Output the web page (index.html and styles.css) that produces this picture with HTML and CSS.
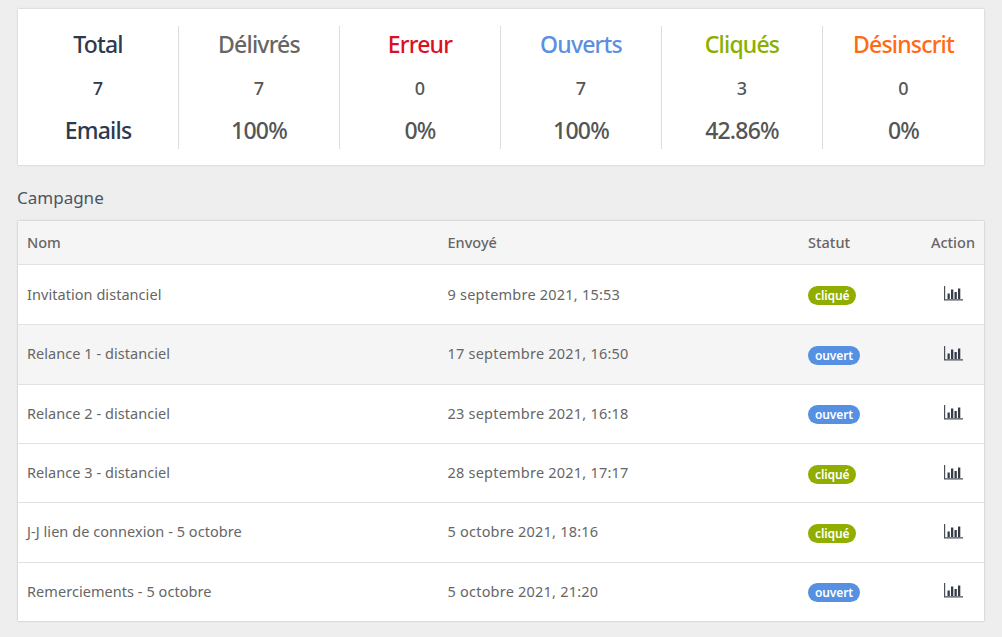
FILE: index.html
```html
<!DOCTYPE html>
<html lang="fr">
<head>
<meta charset="utf-8">
<title>Campagne</title>
<link rel="stylesheet" href="styles.css">
</head>
<body>
<svg class="defs" width="0" height="0" aria-hidden="true">
  <symbol id="chart" viewBox="0 0 19 15">
    <path fill="none" stroke="#4a5058" stroke-width="1.200" d="M.6 0v13.900H19"/>
    <path fill="#353c48" d="M3.500 7.500h2.300V13H3.500zM7 3.500h2.300V13H7zM10.500 6h2.300v7h-2.300zM14 2.500h2.300V13H14z"/>
  </symbol>
</svg>
<main class="page">
  <section class="stats">
    <div class="stat dark"><h2>Total</h2><p class="num">7</p><p class="pct">Emails</p></div>
    <div class="stat grey"><h2>Délivrés</h2><p class="num">7</p><p class="pct">100%</p></div>
    <div class="stat red"><h2>Erreur</h2><p class="num">0</p><p class="pct">0%</p></div>
    <div class="stat blue"><h2>Ouverts</h2><p class="num">7</p><p class="pct">100%</p></div>
    <div class="stat green"><h2>Cliqués</h2><p class="num">3</p><p class="pct">42.86%</p></div>
    <div class="stat orange"><h2>Désinscrit</h2><p class="num">0</p><p class="pct">0%</p></div>
  </section>
  <h3 class="title">Campagne</h3>
  <section class="table">
    <div class="row head"><div>Nom</div><div>Envoyé</div><div>Statut</div><div class="act">Action</div></div>
    <div class="row"><div class="name">Invitation distanciel</div><div class="date">9 septembre 2021, 15:53</div><div class="state"><span class="badge clicked">cliqué</span></div><div class="act"><svg class="ico"><use href="#chart"/></svg></div></div>
    <div class="row alt"><div class="name">Relance 1 - distanciel</div><div class="date">17 septembre 2021, 16:50</div><div class="state"><span class="badge opened">ouvert</span></div><div class="act"><svg class="ico"><use href="#chart"/></svg></div></div>
    <div class="row"><div class="name">Relance 2 - distanciel</div><div class="date">23 septembre 2021, 16:18</div><div class="state"><span class="badge opened">ouvert</span></div><div class="act"><svg class="ico"><use href="#chart"/></svg></div></div>
    <div class="row"><div class="name">Relance 3 - distanciel</div><div class="date">28 septembre 2021, 17:17</div><div class="state"><span class="badge clicked">cliqué</span></div><div class="act"><svg class="ico"><use href="#chart"/></svg></div></div>
    <div class="row"><div class="name">J-J lien de connexion - 5 octobre</div><div class="date">5 octobre 2021, 18:16</div><div class="state"><span class="badge clicked">cliqué</span></div><div class="act"><svg class="ico"><use href="#chart"/></svg></div></div>
    <div class="row"><div class="name">Remerciements - 5 octobre</div><div class="date">5 octobre 2021, 21:20</div><div class="state"><span class="badge opened">ouvert</span></div><div class="act"><svg class="ico"><use href="#chart"/></svg></div></div>
  </section>
</main>
</body>
</html>
```
FILE: styles.css
```css
* { box-sizing: border-box; }
html, body { margin: 0; height: 100%; }
body {
  background: #eee;
  font-family: "Noto Sans", "Open Sans", sans-serif;
  color: #666;
  overflow: hidden;
}
.defs { position: absolute; }
.page { padding: 9px 18px 0 18px; }
.stats {
  display: grid;
  grid-template-columns: repeat(6, 1fr);
  height: 156px;
  padding: 17px 0 16px;
  background: #fff;
  box-shadow: 0 0 2px rgba(0,0,0,.2);
}
.stat {
  display: flex;
  flex-direction: column;
  align-items: center;
  justify-content: space-between;
  border-right: 1px solid #ddd;
}
.stat:last-child { border-right: 0; }
.stat h2 { margin: 0; font-size: 23px; line-height: 36px; font-weight: 500; letter-spacing: -.8px; }
.num { margin: 0; padding-top: 3px; font-size: 18px; line-height: 30px; font-weight: 500; color: #555; }
.pct { margin: 0; font-size: 23px; line-height: 38px; font-weight: 500; letter-spacing: -.8px; color: #555; }
.dark h2, .dark .pct, .dark .num { color: #2b3a4e; }
.grey h2 { color: #666; }
.red h2 { color: #d9121f; }
.blue h2 { color: #5b8fdf; }
.green h2 { color: #8aaf00; }
.orange h2 { color: #ff6a13; }
.title { margin: 21px 0 11px -1px; font-size: 17px; line-height: 24px; font-weight: 400; color: #4a5563; }
.table { background: #fff; box-shadow: 0 0 2px rgba(0,0,0,.25); }
.row {
  display: grid;
  grid-template-columns: 420.500px 360.500px 1fr 80px;
  align-items: center;
  height: 59.330px;
  padding: 0 9px 2px 9px;
  font-size: 14.500px;
  border-top: 1.500px solid #e2e2e2;
}
.row.head { height: 44px; background: #f5f5f5; font-weight: 500; border-top: 0; border-bottom: 1px solid #e2e2e2; color: #666; }
.row.head + .row { border-top: 0; }
.row.alt { background: #f5f5f5; }
.name { letter-spacing: .05px; }
.date { letter-spacing: .22px; }
.act { text-align: right; }
.state { margin-top: 4px; }
.badge {
  display: block;
  width: fit-content;
  height: 19px;
  padding: 0 7px;
  border-radius: 10px;
  color: #fff;
  font-size: 12px;
  line-height: 19px;
  font-weight: 600;
  letter-spacing: -.1px;
}
.clicked { background: #8fae00; }
.opened { background: #5590e2; }
.ico { display: block; width: 19px; height: 15px; margin: 0 12px 0 auto; }
```
